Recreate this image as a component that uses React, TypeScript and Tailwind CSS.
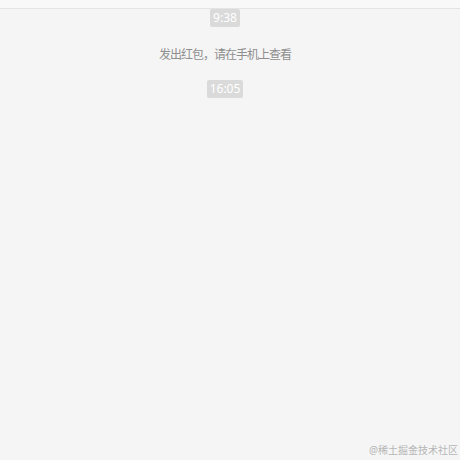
import React from "react";

export default function App() {
  return (
    <div
      className="relative w-[460px] h-[460px] overflow-hidden bg-[#f5f5f5]"
      style={{ fontFamily: '"Noto Sans", "Noto Sans CJK SC", sans-serif' }}
    >
      <div className="h-[9px] bg-[#f8f8f8] border-b border-[#e4e4e4]" />
      <div className="w-[450px] flex flex-col items-center">
        <div className="h-[18px] px-[3px] bg-[#dadada] text-white text-[12px] leading-[18px] rounded-[2px]">
          9:38
        </div>
        <div className="mt-[19px] text-[12px] leading-[17px] text-[#8e8e8e] tracking-[-1px]">
          发出红包，请在手机上查看
        </div>
        <div className="mt-[17px] h-[18px] px-[3px] bg-[#dadada] text-white text-[12px] leading-[18px] rounded-[2px]">
          16:05
        </div>
      </div>
      <div className="absolute right-[2px] bottom-[3px] text-[10px] leading-[14px] text-[#b5b5b5]">
        @稀土掘金技术社区
      </div>
    </div>
  );
}
